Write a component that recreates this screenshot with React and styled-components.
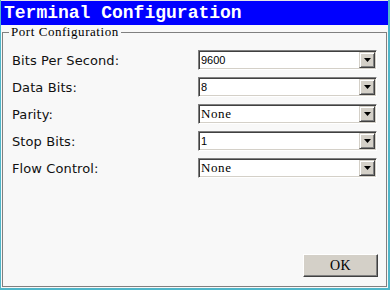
import React from 'react';
import styled, {createGlobalStyle} from 'styled-components';

const GlobalStyle = createGlobalStyle`
  html, body {
    margin: 0;
    padding: 0;
    background: #4fb6c9;
    width: 390px;
    height: 290px;
    overflow: hidden;
  }
`

const fields = [
  {label: "Bits Per Second:", value: "9600", sans: true},
  {label: "Data Bits:", value: "8", sans: true},
  {label: "Parity:", value: "None"},
  {label: "Stop Bits:", value: "1", sans: true},
  {label: "Flow Control:", value: "None"},
]

const App = () => (
  <>
    <GlobalStyle />
    <Window>
      <TitleBar>Terminal Configuration</TitleBar>
      <Body>
        <Group>
          <Legend>Port Configuration</Legend>
          <Rows>
            {fields.map(f => (
              <React.Fragment key={f.label}>
                <Label>{f.label}</Label>
                <Combo>
                  <Value $sans={f.sans}>{f.value}</Value>
                  <DropButton>
                    <svg width="7" height="4" viewBox="0 0 7 4">
                      <path d="M0 0H7L3.5 4Z" fill="#000" />
                    </svg>
                  </DropButton>
                </Combo>
              </React.Fragment>
            ))}
          </Rows>
          <Footer>
            <OkButton>OK</OkButton>
          </Footer>
        </Group>
      </Body>
    </Window>
  </>
)

const serif = `"Liberation Serif", serif`

const Window = styled.div`
  margin-left: 1px;
  width: 387px;
  height: 288px;
  border-top: 1px solid #e6e6e6;
  box-sizing: border-box;
  display: flex;
  flex-direction: column;
  background: #f8f8f8;
`

const TitleBar = styled.div`
  height: 24px;
  flex: none;
  background: #0000ff;
  color: #fff;
  font-family: "Liberation Mono", monospace;
  font-weight: bold;
  font-size: 18px;
  line-height: 25px;
  padding-left: 3px;
  white-space: nowrap;
`

const Body = styled.div`
  flex: 1;
  display: flex;
  padding: 1px;
  min-height: 0;
`

const Group = styled.fieldset`
  flex: 1;
  margin: 0;
  min-width: 0;
  border: 1px solid #808080;
  padding: 12px 9px 9px 9px;
  display: flex;
  flex-direction: column;
`

const Legend = styled.legend`
  font-family: ${serif};
  font-size: 13px;
  letter-spacing: 0.55px;
  line-height: 12px;
  height: 12px;
  padding: 0 2px 0 2px;
  margin-left: -3px;
  color: #000;
`

const Rows = styled.div`
  display: grid;
  grid-template-columns: 1fr 179px;
  grid-auto-rows: 20px;
  row-gap: 7px;
  align-items: start;
`

const Label = styled.div`
  font-family: "DejaVu Sans", sans-serif;
  font-size: 13px;
  color: #111;
  height: 20px;
  line-height: 22px;
  letter-spacing: 0.1px;
`

const Combo = styled.div`
  height: 20px;
  box-sizing: border-box;
  border-top: 1px solid #808080;
  border-left: 1px solid #808080;
  border-bottom: 1px solid #ffffff;
  border-right: 1px solid #ffffff;
  box-shadow: inset 1px 1px 0 #404040, inset -1px -1px 0 #d4d0c8;
  background: #fff;
  padding: 1px;
  display: flex;
  align-items: stretch;
`

const Value = styled.div`
  flex: 1;
  font-family: ${p => p.$sans ? '"Liberation Sans", sans-serif' : serif};
  font-size: ${p => p.$sans ? '11px' : '13px'};
  letter-spacing: ${p => p.$sans ? '0' : '0.6px'};
  line-height: 16px;
  padding-left: 1px;
  color: #000;
`

const DropButton = styled.div`
  width: 16px;
  box-sizing: border-box;
  background: #d4d0c8;
  border-top: 1px solid #d4d0c8;
  border-left: 1px solid #d4d0c8;
  border-right: 1px solid #404040;
  border-bottom: 1px solid #404040;
  box-shadow: inset 1px 1px 0 #ffffff, inset -1px -1px 0 #808080;
  display: flex;
  align-items: center;
  justify-content: center;
`

const Footer = styled.div`
  margin-top: auto;
  display: flex;
  justify-content: flex-end;
  margin-right: -1px;
`

const OkButton = styled.button`
  width: 75px;
  height: 23px;
  box-sizing: border-box;
  background: #d4d0c8;
  border: none;
  border-top: 1px solid #ffffff;
  border-left: 1px solid #ffffff;
  border-right: 1px solid #404040;
  border-bottom: 1px solid #404040;
  box-shadow: inset -1px -1px 0 #808080;
  font-family: ${serif};
  font-size: 14px;
  letter-spacing: 0.5px;
  color: #000;
  padding: 0;
`

export default App;
